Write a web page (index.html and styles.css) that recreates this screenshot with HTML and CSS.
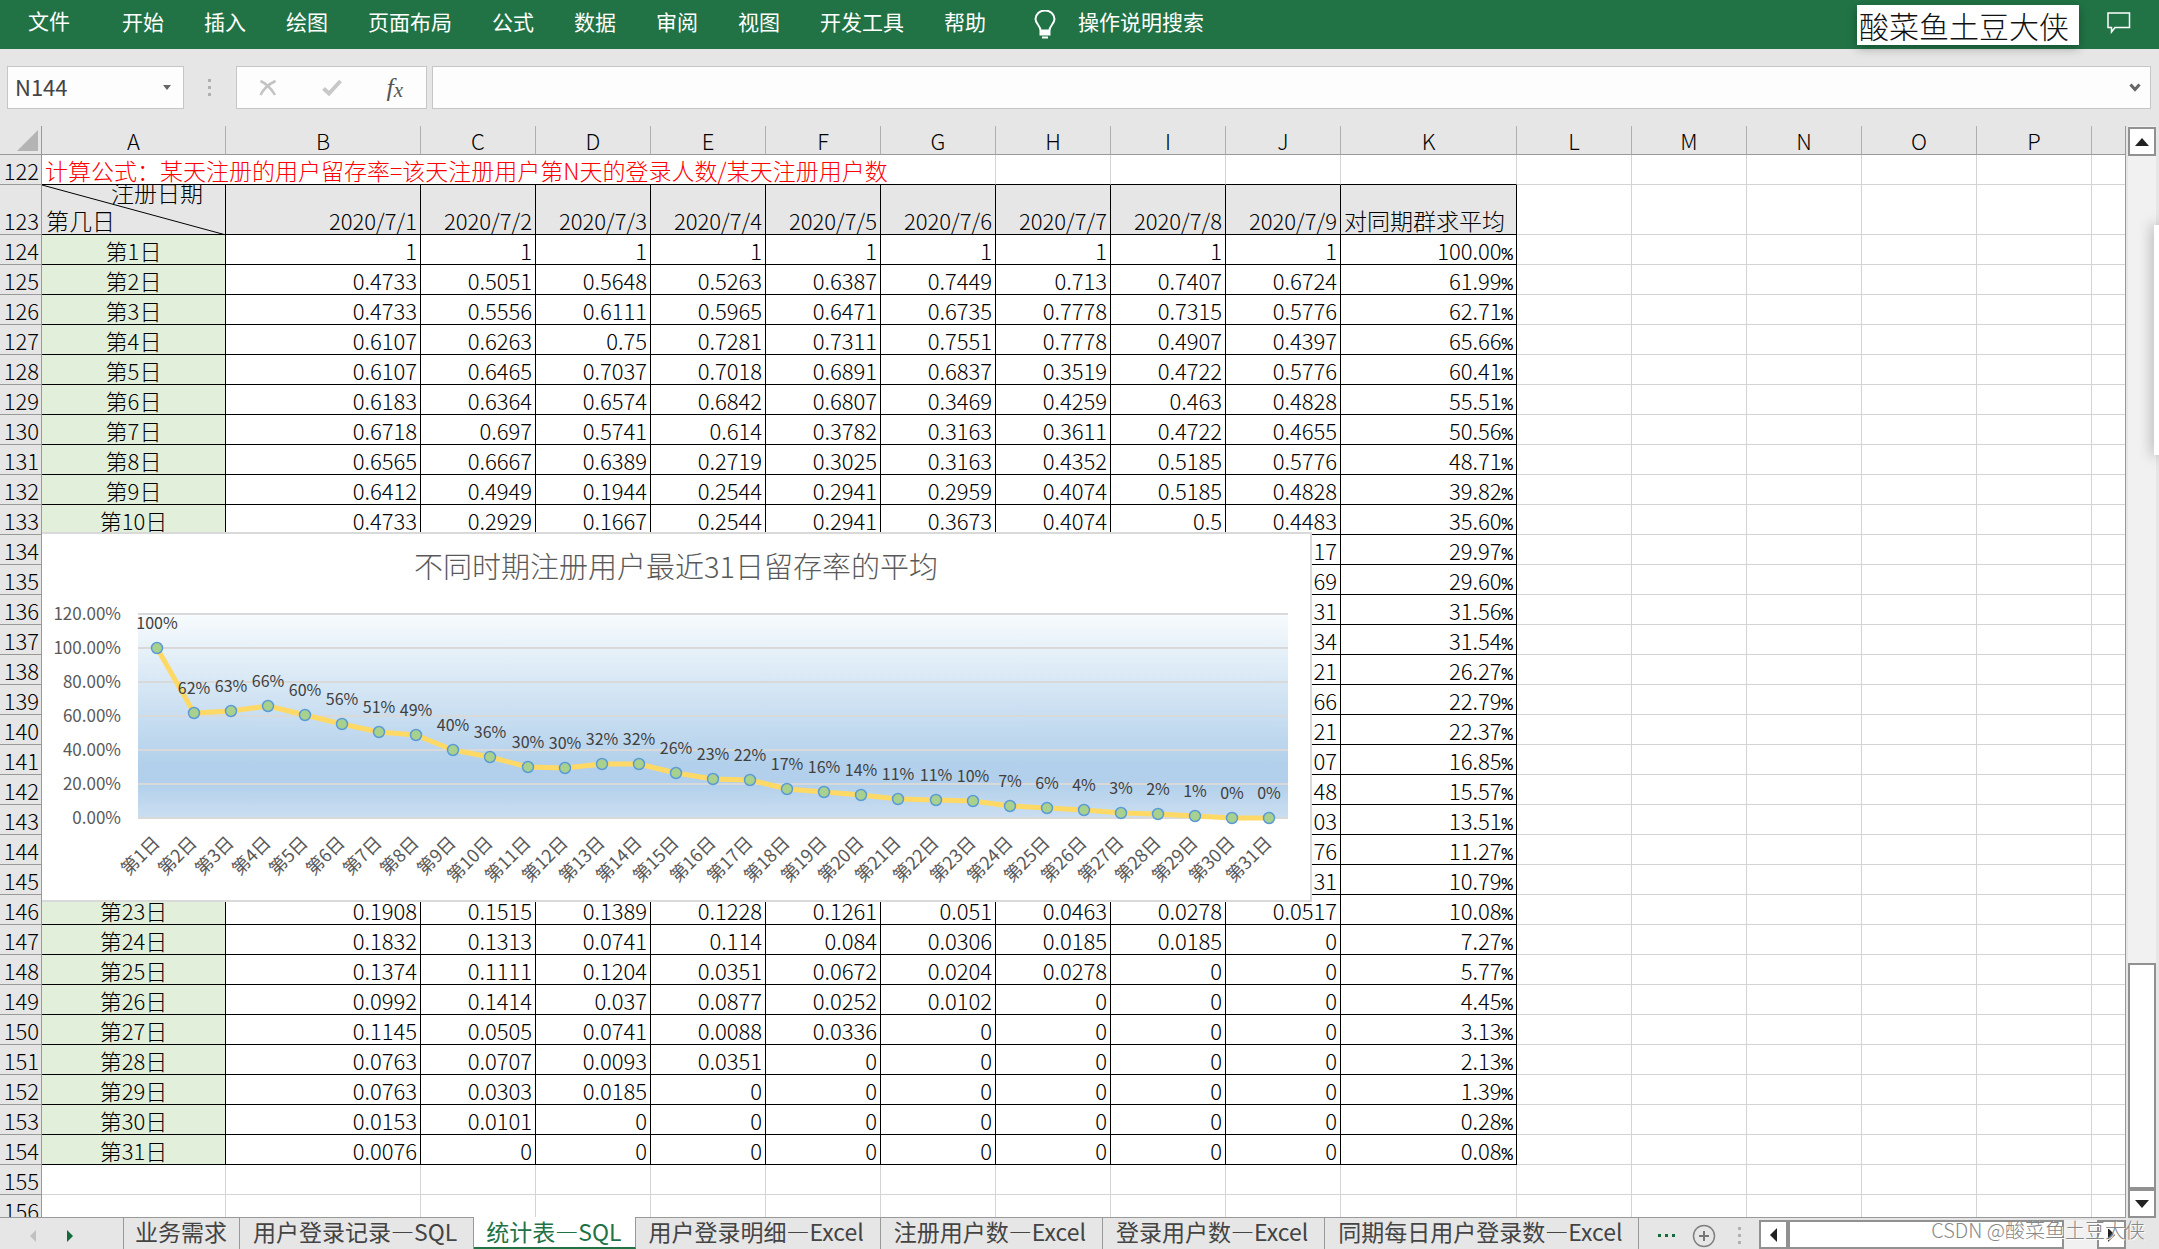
FILE: index.html
```html
<!DOCTYPE html>
<html lang="zh-CN">
<head>
<meta charset="utf-8">
<title>统计表—SQL</title>
<link rel="stylesheet" href="styles.css">
</head>
<body>
<header class="ribbon">
  <nav class="ribbon-tabs">
    <button class="ribbon-tab file">文件</button>
    <button class="ribbon-tab">开始</button>
    <button class="ribbon-tab">插入</button>
    <button class="ribbon-tab">绘图</button>
    <button class="ribbon-tab">页面布局</button>
    <button class="ribbon-tab">公式</button>
    <button class="ribbon-tab">数据</button>
    <button class="ribbon-tab">审阅</button>
    <button class="ribbon-tab">视图</button>
    <button class="ribbon-tab">开发工具</button>
    <button class="ribbon-tab">帮助</button>
    <button class="ribbon-tab search">
      <svg class="bulb" viewBox="0 0 22 30" width="22" height="30"><path d="M6.500 20.500C6.500 15.500 1.500 14 1.500 9a9.500 8.500 0 0 1 19 0C20.500 14 15.500 15.500 15.500 20.500zM6.500 20.500v4h9v-4M6.500 22.500h9M8 27.500h6" fill="none" stroke="#fff" stroke-width="2"/></svg>
      操作说明搜索
    </button>
  </nav>
  <span class="user-name">酸菜鱼土豆大侠</span>
  <button class="comment" aria-label="批注">
    <svg viewBox="0 0 24 22" width="24" height="22"><path d="M1 1h21.500v14.500H8L4.500 20V15.500H1z" fill="none" stroke="#fff" stroke-width="1.500"/></svg>
  </button>
</header>

<section class="formula-bar">
  <div class="name-box">
    <input class="name-input" aria-label="名称框" value="N144">
    <svg viewBox="0 0 8 5" width="8" height="5"><path d="M0 0h8L4 5z" fill="#666"/></svg>
  </div>
  <svg class="grip" viewBox="0 0 3 18" width="3" height="18"><path d="M0 0h3v3H0zM0 7h3v3H0zM0 14h3v3H0z" fill="#b0b0b0"/></svg>
  <div class="formula-actions">
    <button aria-label="取消"><svg viewBox="0 0 18 18" width="18" height="18"><path d="M1.500 2C6 4 12 9 16 16M16.500 2C10 5 5 9 1.500 16" fill="none" stroke="#c3c3c3" stroke-width="2.500"/></svg></button>
    <button aria-label="输入"><svg viewBox="0 0 20 18" width="20" height="18"><path d="M1.500 9.500L7 14.500L18.500 2" fill="none" stroke="#c8c8c8" stroke-width="4"/></svg></button>
    <button class="fx" aria-label="插入函数">f<span>x</span></button>
  </div>
  <div class="formula-box">
    <input class="formula-input" aria-label="编辑栏">
    <svg viewBox="0 0 12 9" width="12" height="9"><path d="M1.500 1.500L6 6.500L10.500 1.500" fill="none" stroke="#666" stroke-width="3"/></svg>
  </div>
</section>

<main class="workspace">
  <div class="sheet">
    <table class="grid">
      <colgroup><col class="c-row"><col class="c-a"><col class="c-b"><col span="8" class="c-std"><col class="c-k"><col span="6" class="c-std"></colgroup>
      <thead><tr id="letters"></tr></thead>
      <tbody id="cells"></tbody>
    </table>
    <svg class="chart" id="chart" viewBox="0 0 1270 370" width="1270" height="370" role="img" aria-label="留存率折线图"></svg>
  </div>
  <div class="vscroll">
    <button aria-label="向上滚动"><svg viewBox="0 0 14 8" width="14" height="8"><path d="M0 8L7 0l7 8z" fill="#222"/></svg></button>
    <div class="vthumb"></div>
    <button aria-label="向下滚动"><svg viewBox="0 0 14 8" width="14" height="8"><path d="M0 0h14L7 8z" fill="#222"/></svg></button>
  </div>
  <aside class="side-panel"></aside>
</main>

<footer class="tab-bar">
  <div class="tab-nav">
    <button aria-label="上一张"><svg viewBox="0 0 6 12" width="6" height="12"><path d="M6 0v12L0 6z" fill="#c0c0c0"/></svg></button>
    <button aria-label="下一张"><svg viewBox="0 0 6 12" width="6" height="12"><path d="M0 0v12l6-6z" fill="#126b38"/></svg></button>
  </div>
  <div class="sheet-tabs">
    <button class="sheet-tab short">业务需求</button>
    <button class="sheet-tab">用户登录记录—SQL</button>
    <button class="sheet-tab active">统计表—SQL</button>
    <button class="sheet-tab">用户登录明细—Excel</button>
    <button class="sheet-tab">注册用户数—Excel</button>
    <button class="sheet-tab">登录用户数—Excel</button>
    <button class="sheet-tab">同期每日用户登录数—Excel</button>
  </div>
  <div class="tab-tools">
    <button aria-label="更多工作表"><svg viewBox="0 0 18 4" width="18" height="4"><path d="M0 0h3v3H0zM7 0h3v3H7zM14 0h3v3h-3z" fill="#126b38"/></svg></button>
    <button aria-label="新工作表"><svg viewBox="0 0 24 24" width="24" height="24"><circle cx="12" cy="12" r="10.500" fill="none" stroke="#808080" stroke-width="1.500"/><path d="M12 7v10M7 12h10" stroke="#777" stroke-width="2"/></svg></button>
    <svg class="tab-grip" viewBox="0 0 3 18" width="3" height="18"><path d="M0 0h3v3H0zM0 7h3v3H0zM0 14h3v3H0z" fill="#b0b0b0"/></svg>
  </div>
  <div class="hscroll">
    <button aria-label="向左滚动"><svg viewBox="0 0 7 14" width="7" height="14"><path d="M7 0v14L0 7z" fill="#222"/></svg></button>
    <div class="hthumb"></div>
    <button aria-label="向右滚动"><svg viewBox="0 0 7 14" width="7" height="14"><path d="M0 0v14l7-7z" fill="#222"/></svg></button>
  </div>
  <span class="watermark">CSDN @酸菜鱼土豆大侠</span>
</footer>
<script src="sheet.js"></script>
</body>
</html>
```
FILE: styles.css
```css
* { box-sizing: border-box; }
body {
  margin: 0;
  height: 100vh;
  display: flex;
  flex-direction: column;
  overflow: hidden;
  background: #e6e6e6;
  color: #000;
  font-family: "Noto Sans CJK SC", "Noto Sans", sans-serif;
  font-size: 21px;
}
button {
  border: 0;
  padding: 0;
  background: none;
  font: inherit;
  color: inherit;
  display: flex;
  align-items: center;
  justify-content: center;
  white-space: nowrap;
}
input {
  border: 0;
  padding: 0;
  background: none;
  font: inherit;
  color: #444;
  min-width: 0;
  outline: 0;
}
svg { display: block; flex: none; }

.ribbon {
  height: 49px;
  flex: none;
  display: flex;
  align-items: center;
  background: #217346;
  color: #fff;
  padding: 0 28px 0 8px;
}
.ribbon-tabs { display: flex; flex: 1; height: 44px; padding-bottom: 8px; }
.ribbon-tab { padding: 0 20px; }
.ribbon-tab.file { margin-right: 12px; padding-bottom: 2px; }
.ribbon-tab.search { margin-left: 8px; gap: 22px; }
.bulb { margin-top: 8px; }
.user-name {
  height: 40px;
  padding: 0 10px 0 2px;
  background: #fff;
  color: #111;
  font-size: 30px;
  font-weight: 300;
  line-height: 40px;
  box-shadow: 0 3px 10px rgba(0, 0, 0, 0.3);
}
.comment { margin-left: 28px; padding-bottom: 4px; }

.formula-bar {
  height: 77px;
  flex: none;
  display: flex;
  align-items: center;
  padding: 0 8px 0 7px;
}
.name-box, .formula-actions, .formula-box {
  height: 43px;
  display: flex;
  align-items: center;
  background: #fdfdfd;
  border: 1px solid #c6c6c6;
}
.name-box { width: 177px; padding: 0 12px 0 7px; }
.name-input { flex: 1; font-size: 22px; padding-bottom: 4px; }
.grip { margin: 0 25px 0 24px; }
.formula-actions { width: 191px; padding: 0 23px 0 22px; justify-content: space-between; }
.formula-actions button { height: 100%; }
.fx {
  font: italic 26px "Liberation Serif", serif;
  color: #555;
}
.fx span { font-size: 21px; padding-top: 5px; }
.formula-box { flex: 1; margin-left: 5px; padding-right: 9px; }
.formula-input { flex: 1; }

.workspace {
  flex: 1;
  min-height: 0;
  display: flex;
  position: relative;
}
.sheet {
  flex: 1;
  min-width: 0;
  position: relative;
  overflow: hidden;
  border-right: 1px solid #999;
  border-bottom: 1px solid #999;
  background: #fff;
}
.grid {
  table-layout: fixed;
  width: 2207px;
  border-collapse: separate;
  border-spacing: 0;
  font-size: 22px;
  font-weight: 300;
  line-height: 28px;
}
.c-row { width: 42px; }
.c-a { width: 184px; }
.c-b { width: 195px; }
.c-std { width: 115px; }
.c-k { width: 176px; }
.grid th, .grid td {
  height: 30px;
  padding: 1px 3px 0;
  white-space: nowrap;
  overflow: hidden;
  vertical-align: bottom;
  border: 0 solid #d4d4d4;
  border-width: 0 1px 1px 0;
  text-align: right;
  font-weight: 300;
}
.grid thead th {
  height: 29px;
  padding-top: 0;
  text-align: center;
  background: #e6e6e6;
  border-right-color: #b0b0b0;
  border-bottom-color: #999;
}
.grid .row-no {
  padding: 1px 2px 0 0;
  background: #e6e6e6;
  border-color: #999;
}
.grid .corner { padding: 0 3px 3px; }
.corner svg { margin-left: auto; }
.grid .note {
  border-bottom-color: #000;
  color: #f00;
  text-align: left;
  font-size: 23px;
}
.grid .top { border-bottom-color: #000; }
.grid .data { border-color: #000; }
.grid .head { height: 50px; background: #e6e6e6; }
.grid .label { background: #e2efda; text-align: center; }
.grid .avg-head { text-align: left; font-size: 23px; }
.grid .split { position: relative; padding: 0; }
.split svg { position: absolute; inset: 0; }
.split-text {
  height: 49px;
  padding: 0 22px 0 4px;
  display: flex;
  flex-direction: column;
  justify-content: flex-end;
  overflow: hidden;
  font-size: 23px;
  line-height: 28px;
  text-align: left;
}
.split-text span:first-child { text-align: right; }
.pct { font-family: "Liberation Mono", monospace; font-size: 19px; line-height: 0; }

.chart { position: absolute; left: 42px; top: 406px; }
.chart-title { font-size: 29px; fill: #595959; font-weight: 300; }
.axis { font-size: 17px; fill: #595959; }
.day { font-size: 18px; fill: #595959; }
.value { font-size: 16px; fill: #404040; }

.vscroll {
  width: 33px;
  flex: none;
  display: flex;
  flex-direction: column;
  padding: 1px 3px 0 2px;
  background: linear-gradient(90deg, #e6e6e6 2px, #f1f1f1 2px 30px, #e6e6e6 30px);
}
.vscroll button, .vthumb { background: #fff; border: 2px solid #919191; }
.vscroll button { height: 29px; flex: none; }
.vthumb { height: 226px; margin-top: auto; }
.side-panel {
  position: absolute;
  right: 0;
  top: 99px;
  width: 5px;
  height: 230px;
  background: #fff;
  box-shadow: 0 0 14px rgba(0, 0, 0, 0.5);
}

.tab-bar {
  height: 31px;
  flex: none;
  display: flex;
  position: relative;
  padding-right: 33px;
  color: #444;
}
.tab-nav { width: 123px; flex: none; display: flex; gap: 31px; padding-left: 30px; padding-top: 4px; }
.sheet-tabs { display: flex; margin-top: -1px; font-size: 23px; }
.sheet-tab {
  border-right: 1px solid #999;
  padding: 0 16px 4px 13px;
}
.sheet-tab.short { padding: 0 12px 4px 11px; border-left: 1px solid #999; }
.sheet-tab.active {
  background: #fff;
  color: #217346;
  border-bottom: 2px solid #217346;
  padding: 0 13px 2px 12px;
}
.tab-tools { flex: 1; display: flex; align-items: center; gap: 16px; padding: 5px 0 0 19px; }
.tab-grip { margin-left: 6px; }
.hscroll {
  width: 367px;
  flex: none;
  margin-top: 2px;
  display: flex;
  background: #f1f1f1;
}
.hscroll button, .hthumb { background: #fff; border: 2px solid #919191; }
.hscroll button { width: 29px; }
.hthumb { width: 276px; margin-right: auto; }
.watermark {
  position: absolute;
  right: 14px;
  top: -3px;
  font-size: 20px;
  font-weight: 300;
  line-height: 30px;
  color: #888;
  text-shadow: 1px 1px 0 #fff;
}
```
FILE: sheet.js
```js
const rates = [
  [1, 1, 1, 1, 1, 1, 1, 1, 1, '100.00'],
  ['0.4733', '0.5051', '0.5648', '0.5263', '0.6387', '0.7449', '0.713', '0.7407', '0.6724', '61.99'],
  ['0.4733', '0.5556', '0.6111', '0.5965', '0.6471', '0.6735', '0.7778', '0.7315', '0.5776', '62.71'],
  ['0.6107', '0.6263', '0.75', '0.7281', '0.7311', '0.7551', '0.7778', '0.4907', '0.4397', '65.66'],
  ['0.6107', '0.6465', '0.7037', '0.7018', '0.6891', '0.6837', '0.3519', '0.4722', '0.5776', '60.41'],
  ['0.6183', '0.6364', '0.6574', '0.6842', '0.6807', '0.3469', '0.4259', '0.463', '0.4828', '55.51'],
  ['0.6718', '0.697', '0.5741', '0.614', '0.3782', '0.3163', '0.3611', '0.4722', '0.4655', '50.56'],
  ['0.6565', '0.6667', '0.6389', '0.2719', '0.3025', '0.3163', '0.4352', '0.5185', '0.5776', '48.71'],
  ['0.6412', '0.4949', '0.1944', '0.2544', '0.2941', '0.2959', '0.4074', '0.5185', '0.4828', '39.82'],
  ['0.4733', '0.2929', '0.1667', '0.2544', '0.2941', '0.3673', '0.4074', '0.5', '0.4483', '35.60'],
  ['', '', '', '', '', '', '', '', '17', '29.97'],
  ['', '', '', '', '', '', '', '', '69', '29.60'],
  ['', '', '', '', '', '', '', '', '31', '31.56'],
  ['', '', '', '', '', '', '', '', '34', '31.54'],
  ['', '', '', '', '', '', '', '', '21', '26.27'],
  ['', '', '', '', '', '', '', '', '66', '22.79'],
  ['', '', '', '', '', '', '', '', '21', '22.37'],
  ['', '', '', '', '', '', '', '', '07', '16.85'],
  ['', '', '', '', '', '', '', '', '48', '15.57'],
  ['', '', '', '', '', '', '', '', '03', '13.51'],
  ['', '', '', '', '', '', '', '', '76', '11.27'],
  ['', '', '', '', '', '', '', '', '31', '10.79'],
  ['0.1908', '0.1515', '0.1389', '0.1228', '0.1261', '0.051', '0.0463', '0.0278', '0.0517', '10.08'],
  ['0.1832', '0.1313', '0.0741', '0.114', '0.084', '0.0306', '0.0185', '0.0185', 0, '7.27'],
  ['0.1374', '0.1111', '0.1204', '0.0351', '0.0672', '0.0204', '0.0278', 0, 0, '5.77'],
  ['0.0992', '0.1414', '0.037', '0.0877', '0.0252', '0.0102', 0, 0, 0, '4.45'],
  ['0.1145', '0.0505', '0.0741', '0.0088', '0.0336', 0, 0, 0, 0, '3.13'],
  ['0.0763', '0.0707', '0.0093', '0.0351', 0, 0, 0, 0, 0, '2.13'],
  ['0.0763', '0.0303', '0.0185', 0, 0, 0, 0, 0, 0, '1.39'],
  ['0.0153', '0.0101', 0, 0, 0, 0, 0, 0, 0, '0.28'],
  ['0.0076', 0, 0, 0, 0, 0, 0, 0, 0, '0.08']
];

const blanks = n => '<td></td>'.repeat(n);
const rowNo = n => `<th class="row-no" scope="row">${n}</th>`;

document.getElementById('letters').innerHTML =
  '<th class="row-no corner"><svg viewBox="0 0 21 21" width="21" height="21"><path d="M21 0v21H0z" fill="#b4b4b4"/></svg></th>' +
  [...'ABCDEFGHIJKLMNOP', ''].map(c => `<th scope="col">${c}</th>`).join('');

let rows = `<tr>${rowNo(122)}<td class="note" colspan="7">计算公式：某天注册的用户留存率=该天注册用户第N天的登录人数/某天注册用户数</td>` +
  '<td class="top"></td>'.repeat(4) + blanks(6) + '</tr>';

rows += `<tr>${rowNo(123)}<td class="data head split"><svg viewBox="0 0 184 50" width="184" height="50"><path d="M0 0L184 50" stroke="#000"/></svg>` +
  '<div class="split-text"><span>注册日期</span><span>第几日</span></div></td>';
for (let d = 1; d <= 9; d++) rows += `<td class="data head">2020/7/${d}</td>`;
rows += `<td class="data head avg-head">对同期群求平均</td>${blanks(6)}</tr>`;

rates.forEach((r, i) => {
  rows += `<tr>${rowNo(124 + i)}<td class="data label">第${i + 1}日</td>` +
    r.slice(0, 9).map(v => `<td class="data">${v}</td>`).join('') +
    `<td class="data">${r[9]}<span class="pct">%</span></td>${blanks(6)}</tr>`;
});
rows += `<tr>${rowNo(155)}${blanks(17)}</tr><tr>${rowNo(156)}${blanks(17)}</tr>`;
document.getElementById('cells').innerHTML = rows;

// Plot area inside the chart frame
const left = 96, right = 1246, top0 = 82, bottom = 286;
const step = (right - left) / rates.length;
const px = i => Math.round(left + step * (i + 0.5));
const py = v => Math.round(bottom - (bottom - top0) * v / 120);

let chart = '<defs><linearGradient id="plot" x1="0" y1="0" x2="0" y2="1">' +
  '<stop offset="0" stop-color="#f7fbfd"/><stop offset="0.74" stop-color="#b2d0eb"/>' +
  '<stop offset="0.83" stop-color="#b2d0eb"/><stop offset="1" stop-color="#cbdef1"/></linearGradient></defs>' +
  '<rect x="-1" y="1" width="1270" height="368" fill="#fff" stroke="#d9d9d9" stroke-width="2"/>' +
  '<text class="chart-title" x="634" y="46" text-anchor="middle">不同时期注册用户最近31日留存率的平均</text>' +
  `<rect x="${left}" y="${top0}" width="${right - left}" height="${bottom - top0}" fill="url(#plot)"/>`;
for (let v = 0; v <= 120; v += 20) {
  chart += `<path d="M${left} ${py(v)}H${right}" stroke="#d9d9d9" stroke-width="2"/>` +
    `<text class="axis" x="79" y="${py(v) + 6}" text-anchor="end">${v.toFixed(2)}%</text>`;
}
const points = rates.map((r, i) => [px(i), py(+r[9])]);
chart += `<polyline points="${points.join(' ')}" fill="none" stroke="#ffd966" stroke-width="5" stroke-linejoin="round"/>`;
points.forEach(([x, y], i) => {
  chart += `<circle cx="${x}" cy="${y}" r="5.5" fill="#a9d18e" stroke="#5b9bd5" stroke-width="1.5"/>` +
    `<text class="value" x="${x}" y="${y - 19}" text-anchor="middle">${Math.round(rates[i][9])}%</text>` +
    `<text class="day" text-anchor="end" transform="translate(${x + 4} ${bottom + 26}) rotate(-45)">第${i + 1}日</text>`;
});
document.getElementById('chart').innerHTML = chart;
```
